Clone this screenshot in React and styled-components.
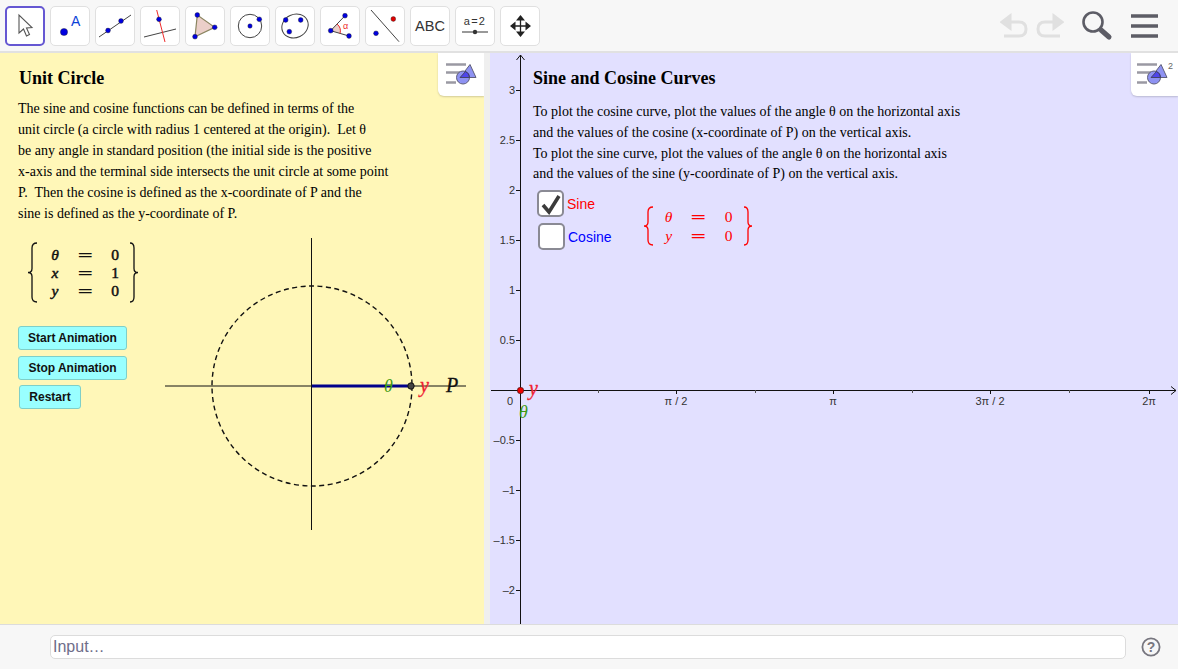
import React from "react"
import styled, { createGlobalStyle } from "styled-components"

const GlobalStyle = createGlobalStyle`
  html, body { margin: 0; padding: 0; height: 100%; overflow: hidden; }
  body { font-family: "Liberation Sans", Arial, sans-serif; background: #fff; }
`

const Page = styled.div`
  width: 1178px;
  height: 669px;
  display: flex;
  flex-direction: column;
`

const Toolbar = styled.div`
  height: 53px;
  flex: none;
  box-sizing: border-box;
  display: flex;
  align-items: flex-start;
  justify-content: space-between;
  padding: 6px 19px 0 5px;
  background: #f7f7f7;
  border-bottom: 2px solid #e1e1e1;
`

const ToolGroup = styled.div`
  display: flex;
  gap: 5px;
`

const ToolButton = styled.div`
  width: 40px;
  height: 40px;
  box-sizing: border-box;
  background: #fff;
  border-radius: 5px;
  border: ${(p) => (p.$active ? "2px solid #6557d2" : "1px solid #e0e0e0")};
  display: flex;
  align-items: center;
  justify-content: center;
  font-size: 14.5px;
  color: #333;
`

const ToolIcon = styled.svg`
  width: 38px;
  height: 38px;
  flex: none;
`

const ActionGroup = styled.div`
  display: flex;
  align-items: center;
  height: 40px;
`

const HistoryIcon = styled.svg`
  margin-right: 17px;
`

const MenuIcon = styled.svg`
  margin-left: 16px;
`

const Main = styled.div`
  flex: 1;
  display: flex;
  min-height: 0;
`

const LeftPanel = styled.div`
  position: relative;
  width: 484px;
  flex: none;
  background: #fff7b8;
  overflow: hidden;
  box-sizing: border-box;
  padding: 14px 0 0 18px;
`

const Divider = styled.div`
  width: 6px;
  flex: none;
  background: #efefef;
`

const RightPanel = styled.div`
  position: relative;
  flex: 1;
  background: #e2e0ff;
  overflow: hidden;
  box-sizing: border-box;
  padding: 14px 0 0 43px;
`

const Canvas = styled.svg`
  position: absolute;
  left: 0;
  top: 0;
`

const Content = styled.div`
  position: relative;
  font-family: "Liberation Serif", "Times New Roman", serif;
  color: #000;
`

const Title = styled.h2`
  margin: 0 0 ${(p) => p.$gap}px ${(p) => p.$indent || 0}px;
  font-size: 18px;
  line-height: 22px;
  font-weight: bold;
`

const Paragraph = styled.p`
  margin: 0;
  font-size: 14px;
  line-height: ${(p) => p.$lh}px;
  white-space: pre;
`

const MathBlock = styled.div`
  display: flex;
  align-items: stretch;
  margin: ${(p) => p.$margin};
  color: ${(p) => p.$color};
`

const Brace = styled.svg`
  flex: none;
  width: 12px;
  height: ${(p) => p.$h}px;
  fill: none;
  stroke: ${(p) => p.$color};
  stroke-width: 1.3;
`

const MathGrid = styled.div`
  display: grid;
  grid-template-columns: 30px 30px 30px;
  margin: 0 -2px 0 ${(p) => p.$left}px;
  grid-auto-rows: ${(p) => p.$row}px;
  align-content: center;
  justify-items: center;
  align-items: center;
  font-family: "Liberation Serif", serif;
  font-size: 15.5px;
  line-height: 14px;
  -webkit-text-stroke: ${(p) => p.$stroke}px currentColor;
`

const MathVar = styled.i``

const MathEq = styled.span`
  font-family: "DejaVu Serif", serif;
  font-size: 15px;
  transform: scaleX(1.35);
  -webkit-text-stroke: 0;
`

const Buttons = styled.div`
  display: flex;
  flex-direction: column;
  align-items: flex-start;
  margin-top: 23px;
`

const AnimButton = styled.div`
  box-sizing: border-box;
  width: ${(p) => p.$w}px;
  height: 24px;
  margin: 0 0 ${(p) => p.$after}px ${(p) => p.$indent || 0}px;
  display: flex;
  align-items: center;
  justify-content: center;
  background: #99ffff;
  border: 1px solid #7fcfc8;
  border-radius: 3px;
  font-family: "Liberation Sans", Arial, sans-serif;
  font-size: 12px;
  font-weight: bold;
  color: #111;
`

const CheckArea = styled.div`
  display: flex;
  align-items: flex-start;
  margin: 5px 0 0 4px;
`

const CheckList = styled.div`
  display: flex;
  flex-direction: column;
  gap: 6px;
`

const CheckRow = styled.div`
  display: flex;
  align-items: center;
  gap: 3px;
  margin-left: ${(p) => p.$indent || 0}px;
  font-family: "Liberation Sans", Arial, sans-serif;
  font-size: 14px;
  color: ${(p) => p.$color};
`

const CheckBox = styled.div`
  box-sizing: border-box;
  width: 27px;
  height: 27px;
  border: 2px solid #8a8a94;
  border-radius: 5px;
  background: #fff;
  display: flex;
  align-items: center;
  justify-content: center;
`

const StyleTab = styled.div`
  position: absolute;
  top: 0;
  right: 0;
  width: ${(p) => p.$w}px;
  height: 43px;
  background: #fff;
  border-bottom-left-radius: 6px;
  box-shadow: 0 1px 2px rgba(0, 0, 0, 0.18);
  display: flex;
  align-items: center;
  justify-content: center;
`

const BottomBar = styled.div`
  height: 45px;
  flex: none;
  box-sizing: border-box;
  background: #f7f7f7;
  border-top: 1px solid #dcdcdc;
  display: flex;
  align-items: center;
  padding: 0 17px 1px 50px;
  gap: 15px;
`

const InputField = styled.div`
  flex: 1;
  height: 24px;
  box-sizing: border-box;
  background: #fff;
  border: 1px solid #dcdcdc;
  border-radius: 5px;
  padding-left: 2px;
  font-size: 16px;
  line-height: 22px;
  color: #6e6d8a;
`

const Dot = ({ x, y, r = 2.4, c = "#0000e0" }) => (
  <circle cx={x} cy={y} r={r} fill={c} stroke="#222" strokeWidth="0.4" />
)

const icons = [
  <path key="0" d="M13 8 L13 26 L17.5 22 L20.5 29 L23.5 27.5 L20.5 21 L26 20.5 Z" fill="#fff" stroke="#555" strokeWidth="1.1" />,
  <g key="1">
    <Dot x={13} y={25} r={3.6} />
    <text x={20} y={19} fontSize="14" fill="#0b3fd8" fontFamily="Liberation Sans">A</text>
  </g>,
  <g key="2">
    <path d="M3 30 L35 8" stroke="#444" />
    <Dot x={12} y={23.5} />
    <Dot x={25} y={14} />
  </g>,
  <g key="3">
    <path d="M3 30 L35 22" stroke="#444" />
    <path d="M15.7 3 L24 35" stroke="#ee2b2b" />
    <Dot x={18} y={12.3} />
  </g>,
  <g key="4">
    <path d="M11.3 8 L9 29.7 L28.7 20.3 Z" fill="#ebcfc9" stroke="#8a8560" strokeWidth="1.2" />
    <Dot x={11.3} y={8} />
    <Dot x={9} y={29.7} />
    <Dot x={28.7} y={20.3} />
  </g>,
  <g key="5">
    <circle cx="19" cy="19" r="11.7" stroke="#444" />
    <Dot x={19} y={19} r={2.2} />
    <Dot x={28.3} y={12.3} />
  </g>,
  <g key="6">
    <ellipse cx="19" cy="19" rx="13.5" ry="11.5" stroke="#444" transform="rotate(-25 19 19)" />
    <Dot x={9.7} y={13} />
    <Dot x={24.7} y={13} />
    <Dot x={13.3} y={24.7} />
  </g>,
  <g key="7">
    <path d="M9.7 23.7 L16 17 A9 9 0 0 1 19 26.5 Z" fill="#ebcfc9" />
    <path d="M24 8.7 L9.7 23.7 L28 29" stroke="#444" />
    <path d="M16 17 A9 9 0 0 1 19 26.5" stroke="#ee2b2b" />
    <Dot x={24} y={8.7} />
    <Dot x={9.7} y={23.7} />
    <Dot x={28} y={29} />
    <text x={22} y={22} fontSize="9" fill="#ee2b2b" fontFamily="Liberation Sans">α</text>
  </g>,
  <g key="8">
    <path d="M5 3 L33 34.7" stroke="#444" />
    <Dot x={10} y={26.3} />
    <Dot x={27.3} y={12} c="#e00000" />
  </g>,
  null,
  <g key="10">
    <text x={19} y={18} fontSize="11" letterSpacing="1.2" fill="#333" textAnchor="middle" fontFamily="Liberation Sans">a=2</text>
    <path d="M6 25 H32" stroke="#555" strokeWidth="1.2" />
    <circle cx="19" cy="25" r="2.2" fill="#333" />
  </g>,
  <g key="11" fill="#222" stroke="#222">
    <path d="M19.5 10 V28 M11 19 H28" strokeWidth="1.3" />
    <path d="M19.5 8 L15 13.5 H24 Z M19.5 30 L15 24.5 H24 Z M9 19 L14.5 14.5 V23.5 Z M30 19 L24.5 14.5 V23.5 Z" stroke="none" />
  </g>,
]

// same drawing in both views, the right one carries the little 2
const StyleIcon = ({ two }) => (
  <svg width="38" height="34" viewBox="0 0 38 34">
    <g transform={two ? "translate(-3 0)" : undefined}>
      <path d="M4 6.5 H24 M4 14.5 H18 M4 24.5 H14" stroke="#9a99a3" strokeWidth="2.4" />
      <path d="M28 6.5 L34 19.5 L18 19.5 Z" fill="#8e92f2" stroke="#5f5f7a" strokeWidth="1" />
      <circle cx="21" cy="19.5" r="6.5" fill="#8e92f2" stroke="#5f5f7a" strokeWidth="1" />
      <path d="M23.5 13.5 A6.5 6.5 0 0 1 27.5 19.5 L18 19.5 Z" fill="#4f46ea" stroke="#333" strokeWidth="0.7" />
    </g>
    {two && <text x="32" y="11" fontSize="9" fill="#666" fontFamily="Liberation Sans">2</text>}
  </svg>
)

const BraceLeft = ({ h, color }) => (
  <Brace $h={h} $color={color} viewBox={`0 0 12 ${h}`}>
    <path d={`M11 1 Q6 1 6 6 L6 ${h / 2 - 4} Q6 ${h / 2} 2 ${h / 2} Q6 ${h / 2} 6 ${h / 2 + 4} L6 ${h - 6} Q6 ${h - 1} 11 ${h - 1}`} />
  </Brace>
)

const BraceRight = ({ h, color }) => (
  <Brace $h={h} $color={color} viewBox={`0 0 12 ${h}`}>
    <path d={`M2 1 Q6 1 6 6 L6 ${h / 2 - 4} Q6 ${h / 2} 10 ${h / 2} Q6 ${h / 2} 6 ${h / 2 + 4} L6 ${h - 6} Q6 ${h - 1} 2 ${h - 1}`} />
  </Brace>
)

const Serif = "Liberation Serif"

// left graphics view: unit circle, origin at 312,333 in panel coordinates
const UnitCircle = () => (
  <Canvas width="484" height="571">
    <path d="M165 333 H466" stroke="#111" />
    <path d="M311.5 185 V477" stroke="#111" />
    <circle cx="312" cy="333" r="100" fill="none" stroke="#111" strokeWidth="1.4" strokeDasharray="5 3.5" />
    <path d="M312 333 H411" stroke="#00008b" strokeWidth="3" />
    <circle cx="411" cy="333" r="3.2" fill="#444" stroke="#111" />
    <text x="384" y="339" fontSize="18" fontStyle="italic" fill="#3f9a10" fontFamily={Serif}>θ</text>
    <text x="420" y="339" fontSize="20" fontStyle="italic" fill="#f02030" stroke="#f02030" strokeWidth="0.3" fontFamily={Serif}>y</text>
    <text x="446" y="339" fontSize="20" fontStyle="italic" fill="#111" stroke="#111" strokeWidth="0.3" fontFamily={Serif}>P</text>
  </Canvas>
)

const yTicks = [3, 2.5, 2, 1.5, 1, 0.5, -0.5, -1, -1.5, -2]
const xTicks = [
  { x: 156, label: "π / 2" },
  { x: 313, label: "π" },
  { x: 470, label: "3π / 2" },
  { x: 629, label: "2π" },
]
const minorTicks = [78.5, 235.5, 392.5, 549.5]

// right graphics view: origin at 30.5,337.5 in panel coordinates
const CurveAxes = () => (
  <Canvas width="688" height="571">
    <path d="M30.5 571 V2 M26.5 7 L30.5 2 L34.5 7" fill="none" stroke="#111" />
    <path d="M1 337.5 H686 M681 333.5 L686 337.5 L681 341.5" fill="none" stroke="#111" />
    {yTicks.map((v) => (
      <g key={v}>
        <path d={`M26 ${337.5 - v * 100} H30`} stroke="#111" />
        <text x="25" y={341 - v * 100} fontSize="11" textAnchor="end" fill="#333" fontFamily="Liberation Sans">
          {String(v).replace("-", "–")}
        </text>
      </g>
    ))}
    {xTicks.map((t) => (
      <g key={t.label}>
        <path d={`M${30.5 + t.x} 337 V341`} stroke="#111" />
        <text x={30 + t.x} y="352" fontSize="11" textAnchor="middle" fill="#333" fontFamily="Liberation Sans">
          {t.label}
        </text>
      </g>
    ))}
    {minorTicks.map((x) => (
      <path key={x} d={`M${30 + x} 337 V340`} stroke="#555" />
    ))}
    <text x="17" y="352" fontSize="11" fill="#333" fontFamily="Liberation Sans">0</text>
    <circle cx="30.5" cy="337.5" r="3.2" fill="#f00000" stroke="#222" strokeWidth="0.6" />
    <text x="39" y="342" fontSize="20" fontStyle="italic" fill="#f02030" stroke="#f02030" strokeWidth="0.3" fontFamily={Serif}>y</text>
    <text x="29" y="365" fontSize="18" fontStyle="italic" fill="#3f9a10" fontFamily={Serif}>θ</text>
  </Canvas>
)

export default function App() {
  return (
    <Page>
      <GlobalStyle />
      <Toolbar>
        <ToolGroup>
          {icons.map((icon, i) => (
            <ToolButton key={i} $active={i === 0}>
              {icon ? <ToolIcon viewBox="0 0 38 38" fill="none">{icon}</ToolIcon> : "ABC"}
            </ToolButton>
          ))}
        </ToolGroup>
        <ActionGroup>
          <HistoryIcon width="64" height="26" viewBox="0 0 64 26" fill="none" stroke="#e0e0e0" strokeWidth="3">
            <path d="M3 9 H19 Q26 9 26 16 Q26 23 19 23 H4" />
            <path d="M10 3 L2 9 L10 15 Z" fill="#e0e0e0" />
            <path d="M61 9 H45 Q38 9 38 16 Q38 23 45 23 H60" />
            <path d="M54 3 L62 9 L54 15 Z" fill="#e0e0e0" />
          </HistoryIcon>
          <svg width="32" height="32" viewBox="0 0 32 32" fill="none" stroke="#5d5d66">
            <circle cx="12" cy="12" r="9.5" strokeWidth="2.6" />
            <path d="M20 20 L28 27" strokeWidth="5" strokeLinecap="round" />
          </svg>
          <MenuIcon width="30" height="26" viewBox="0 0 30 26" stroke="#5d5d66" strokeWidth="3.4">
            <path d="M2 3 H29 M2 13 H29 M2 23 H29" />
          </MenuIcon>
        </ActionGroup>
      </Toolbar>
      <Main>
        <LeftPanel>
          <UnitCircle />
          <StyleTab $w={46}><StyleIcon /></StyleTab>
          <Content>
            <Title $gap={9} $indent={1}>Unit Circle</Title>
            <Paragraph $lh={21}>
              {`The sine and cosine functions can be defined in terms of the
unit circle (a circle with radius 1 centered at the origin).  Let θ
be any angle in standard position (the initial side is the positive
x-axis and the terminal side intersects the unit circle at some point
P.  Then the cosine is defined as the x-coordinate of P and the
sine is defined as the y-coordinate of P.`}
            </Paragraph>
            <MathBlock $margin="18px 0 0 8px" $color="#111">
              <BraceLeft h={61} color="#111" />
              <MathGrid $left={2} $row={18} $stroke={0.5}>
                <MathVar>θ</MathVar><MathEq>=</MathEq><span>0</span>
                <MathVar>x</MathVar><MathEq>=</MathEq><span>1</span>
                <MathVar>y</MathVar><MathEq>=</MathEq><span>0</span>
              </MathGrid>
              <BraceRight h={61} color="#111" />
            </MathBlock>
            <Buttons>
              <AnimButton $w={109} $after={6}>Start Animation</AnimButton>
              <AnimButton $w={109} $after={5}>Stop Animation</AnimButton>
              <AnimButton $w={62} $after={0} $indent={1}>Restart</AnimButton>
            </Buttons>
          </Content>
        </LeftPanel>
        <Divider />
        <RightPanel>
          <CurveAxes />
          <StyleTab $w={47}><StyleIcon two /></StyleTab>
          <Content>
            <Title $gap={13}>Sine and Cosine Curves</Title>
            <Paragraph $lh={20.8}>
              {`To plot the cosine curve, plot the values of the angle θ on the horizontal axis
and the values of the cosine (x-coordinate of P) on the vertical axis.
To plot the sine curve, plot the values of the angle θ on the horizontal axis
and the values of the sine (y-coordinate of P) on the vertical axis.`}
            </Paragraph>
            <CheckArea>
              <CheckList>
                <CheckRow $color="#ff0000">
                  <CheckBox>
                    <svg width="22" height="22" viewBox="0 0 22 22" fill="none" stroke="#3b3b3b" strokeWidth="3.6">
                      <path d="M3 12 L9 19 L19 3" />
                    </svg>
                  </CheckBox>
                  Sine
                </CheckRow>
                <CheckRow $color="#0000ff" $indent={1}>
                  <CheckBox />
                  Cosine
                </CheckRow>
              </CheckList>
              <MathBlock $margin="16px 0 0 30px" $color="#ff0000">
                <BraceLeft h={40} color="#ff0000" />
                <MathGrid $left={0} $row={19} $stroke={0}>
                  <MathVar>θ</MathVar><MathEq>=</MathEq><span>0</span>
                  <MathVar>y</MathVar><MathEq>=</MathEq><span>0</span>
                </MathGrid>
                <BraceRight h={40} color="#ff0000" />
              </MathBlock>
            </CheckArea>
          </Content>
        </RightPanel>
      </Main>
      <BottomBar>
        <InputField>Input…</InputField>
        <svg width="20" height="20" viewBox="0 0 20 20">
          <circle cx="10" cy="10" r="8.6" fill="none" stroke="#77767f" strokeWidth="1.8" />
          <text x="10" y="15" fontSize="14" fontWeight="bold" textAnchor="middle" fill="#77767f" fontFamily="Liberation Sans">?</text>
        </svg>
      </BottomBar>
    </Page>
  )
}
